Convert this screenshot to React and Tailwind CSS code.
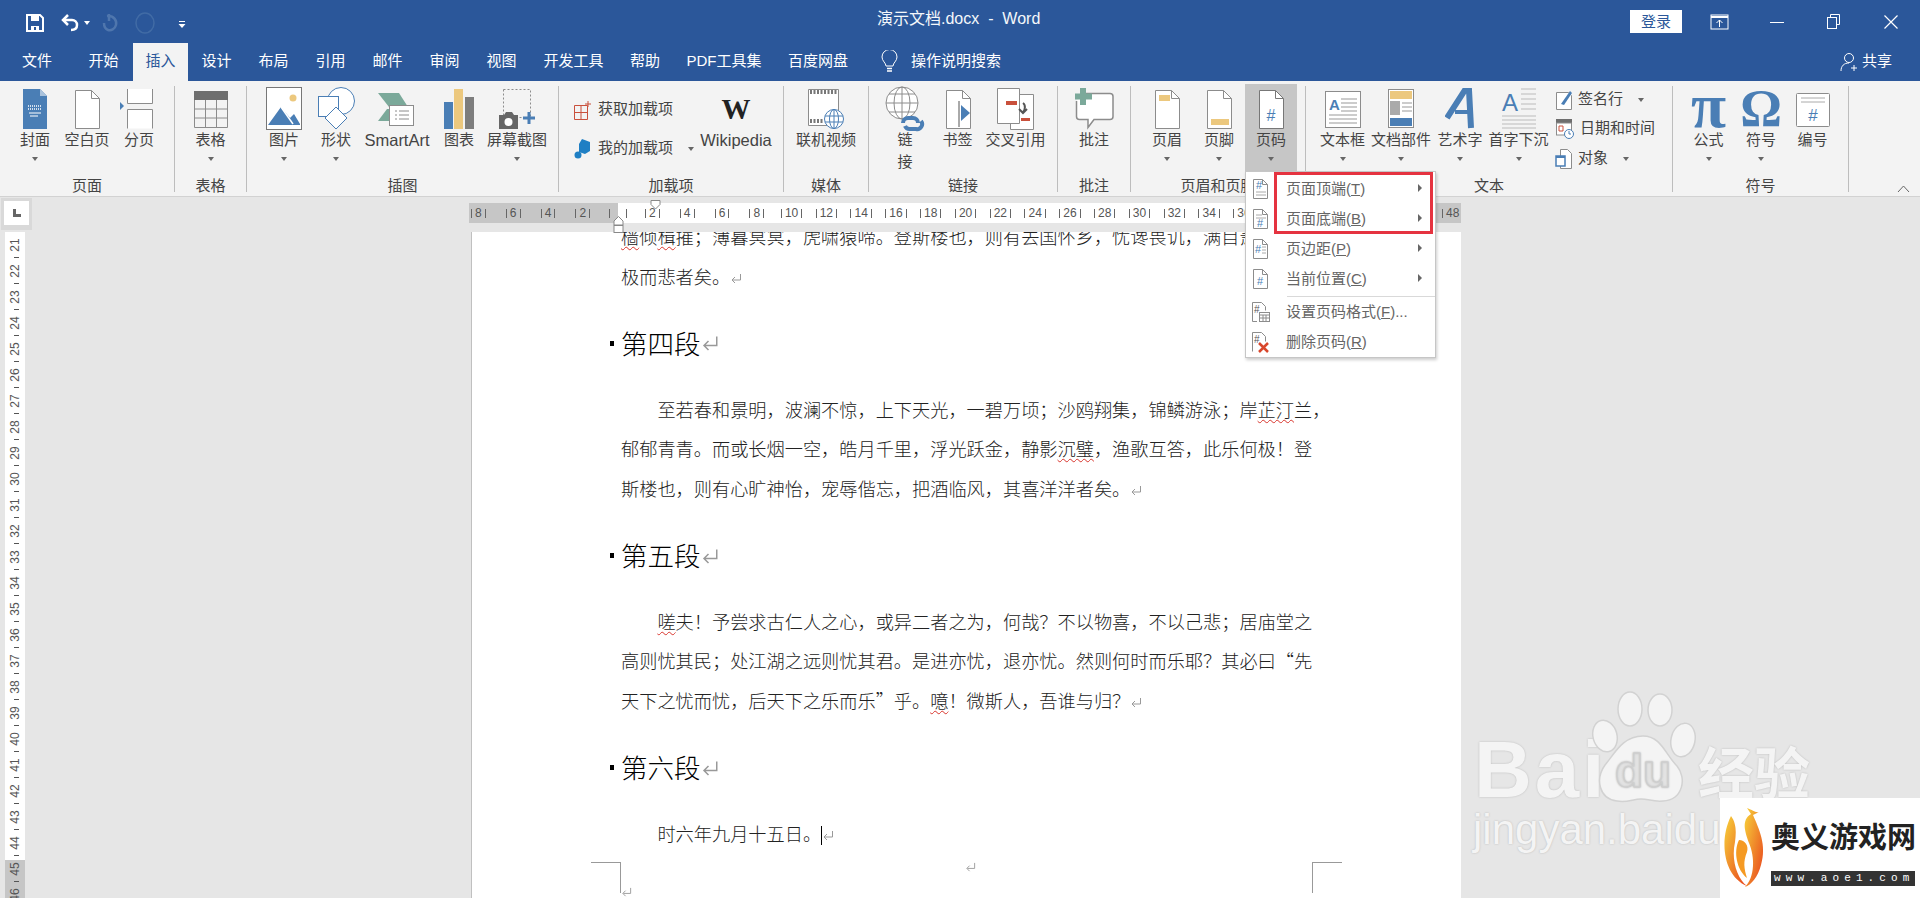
import React from "react";

// shared stroke colours for the office icons
const GR = "#8c8c8c";
const BL = "#4a7eb5";
const YE = "#ecc87e";
const RD = "#c9503c";
const GN = "#7ba99a";

const S = ({ w = 36, h = 40, children }) => (
  <svg width={w} height={h} viewBox={`0 0 ${w} ${h}`} fill="none">
    {children}
  </svg>
);

const Page = ({ x = 2, y = 1, w = 24, h = 38, f = 8, stroke = GR }) => (
  <>
    <path d={`M${x + 0.5} ${y + 0.5}h${w - f}l${f} ${f}v${h - f}h-${w}z`} fill="#fff" stroke={stroke} />
    <path d={`M${x + w - f + 0.5} ${y + 0.5}v${f}h${f}`} stroke={stroke} />
  </>
);

const Caret = ({ className = "" }) => (
  <span className={`inline-block w-0 h-0 border-x-[3.5px] border-x-transparent border-t-[4px] border-t-[#666] ${className}`} />
);

const IconCover = () => (
  <S w={28}>
    <path d="M2 0h17l7 7v33H2z" fill={BL} />
    <path d="M19 0l7 7h-7z" fill="#a9c2dc" />
    <path d="M7 17h14M7 20h14" stroke="#fff" strokeDasharray="1 1" strokeWidth="1.5" />
    <path d="M8 24h12M9 27h8" stroke="#fff" />
  </S>
);
const IconBlank = () => <S w={28}><Page /></S>;
const IconBreak = () => (
  <S w={38}>
    <path d="M7.5 0v14.5h25V0M7.5 39.5V20.5h25v19" stroke={GR} fill="#fff" />
    <path d="M0 13l4 4-4 4z" fill={BL} />
  </S>
);
const IconTable = () => (
  <S w={36}>
    <rect x="1" y="2" width="34" height="9" fill="#6e6e6e" />
    <path d="M1.5 11v27.5h33V11M1.5 20h33M1.5 29h33M12.5 11v27M23.5 11v27" stroke={GR} />
  </S>
);
const IconPicture = () => (
  <S w={36} h={44}>
    <rect x="0.5" y="0.5" width="35" height="42" fill="#fff" stroke="#777" />
    <circle cx="27" cy="11" r="3.5" fill={YE} />
    <path d="M2 38l13-18 9 11 4-4 6 10v1H2z" fill={BL} />
    <path d="M15 20l12 17" stroke="#fff" strokeWidth="1.5" />
  </S>
);
const IconShapes = () => (
  <S w={38} h={44}>
    <circle cx="24" cy="14" r="13.5" fill="#fff" stroke={BL} />
    <rect x="1.5" y="9.5" width="20" height="20" fill="#fff" stroke={BL} />
    <path d="M19 20l11 11-11 11-11-11z" fill="#fff" stroke={BL} />
  </S>
);
const IconSmartArt = () => (
  <S w={40} h={40}>
    <path d="M1 4h21l9 14H12z" fill={GN} />
    <path d="M1 32l9-12h14l-8 12z" fill={GN} />
    <rect x="12.5" y="16.5" width="24" height="20" fill="#fff" stroke={GR} />
    <path d="M18 22h2M22 22h10M18 26h2M22 26h10M18 30h2M22 30h10" stroke={GR} />
  </S>
);
const IconChart = () => (
  <S w={32} h={42}>
    <rect x="1" y="14" width="9" height="27" fill={BL} />
    <rect x="11" y="1" width="9" height="40" fill={YE} />
    <rect x="22" y="9" width="9" height="32" fill="#7d7d7d" />
  </S>
);
const IconShot = () => (
  <S w={38} h={42}>
    <rect x="5.5" y="1.5" width="27" height="28" stroke={GR} strokeDasharray="2 2" />
    <path d="M1 27h5l2-3h6l2 3h4v14H1z" fill="#666" />
    <circle cx="10.5" cy="34" r="4" fill="#fff" />
    <path d="M31 24v12M25 30h12" stroke={BL} strokeWidth="3" />
  </S>
);
const IconGetAddin = () => (
  <S w={20} h={20}>
    <path d="M1.5 5.5h13v14h-13zM1.5 12.5h13M8 5.5v14" stroke={RD} />
    <path d="M15 1v6M12 4h6" stroke={RD} />
  </S>
);
const IconMyAddin = () => (
  <S w={20} h={22}>
    <path d="M9 1l8 3v9l-5 3-6-2V6z" fill="#1f7fc4" />
    <circle cx="5" cy="17" r="3.5" fill="#1f7fc4" />
  </S>
);
const IconVideo = () => (
  <S w={38} h={44}>
    <path d="M1.5 2.5h30v36h-30z" fill="#fff" stroke={GR} />
    <path d="M3 5h27M3 34h14" stroke="#777" strokeWidth="4" strokeDasharray="2 1.5" />
    <circle cx="27" cy="32" r="9.5" fill="#fff" stroke={BL} />
    <ellipse cx="27" cy="32" rx="4.5" ry="9.5" stroke={BL} />
    <path d="M18 29h18M18 35h18M27 22v20" stroke={BL} />
  </S>
);
const IconLink = () => (
  <S w={40} h={46}>
    <circle cx="17" cy="17" r="16" fill="#fff" stroke={GR} />
    <ellipse cx="17" cy="17" rx="8" ry="16" stroke={GR} />
    <path d="M1 17h32M4 8h26M4 26h26M17 1v32" stroke={GR} />
    <path d="M18 37a5 5 0 0 1 5-5h5a5 5 0 0 1 5 5M20 40a5 5 0 0 0 5 3h6a5 5 0 0 0 5-8" stroke={BL} strokeWidth="4" />
  </S>
);
const IconBookmark = () => (
  <S w={28}>
    <Page />
    <path d="M15 12v26" stroke="#555" />
    <path d="M17 16l9 8-9 8z" fill={BL} />
  </S>
);
const IconCross = () => (
  <S w={40} h={44}>
    <path d="M14.5 7.5h23v35h-23z" fill="#fff" stroke={GR} />
    <path d="M1.5 1.5h22v35h-22z" fill="#fff" stroke={GR} />
    <rect x="10" y="14" width="11" height="4" fill={RD} />
    <rect x="25" y="31" width="9" height="3" fill={RD} />
    <path d="M27 16c3 2 2 7 0 9M23 22l4 4 4-4" stroke="#555" strokeWidth="2" />
  </S>
);
const IconComment = () => (
  <S w={40} h={44}>
    <path d="M8 6.5h28a3 3 0 0 1 3 3v20a3 3 0 0 1-3 3H20l-6 8v-8H5.5a3 3 0 0 1-3-3V14" fill="#fff" stroke={GR} strokeWidth="1.5" />
    <path d="M9 1v17M1 9.500h17" stroke={GN} strokeWidth="6" />
  </S>
);
const IconHeader = () => (
  <S w={28}>
    <Page />
    <rect x="6" y="6" width="11" height="6" fill={YE} />
  </S>
);
const IconFooter = () => (
  <S w={28}>
    <Page />
    <rect x="6" y="30" width="18" height="6" fill={YE} />
  </S>
);
const IconPageNum = () => (
  <S w={28}>
    <Page stroke="#777" />
    <text x="14" y="32" textAnchor="middle" fontSize="16" fill={BL} fontFamily="Liberation Sans">#</text>
  </S>
);
const IconTextbox = () => (
  <S w={38}>
    <rect x="1.5" y="2.500" width="35" height="36" fill="#fff" stroke={GR} />
    <text x="5" y="21" fontSize="15" fontWeight="700" fill={BL} fontFamily="Liberation Sans">A</text>
    <path d="M17 10h16M17 14h16M17 18h16M17 22h16M5 26h28M5 30h28M5 34h28" stroke="#999" />
  </S>
);
const IconParts = () => (
  <S w={28} h={42}>
    <rect x="1.5" y="1.500" width="25" height="38" fill="#fff" stroke={GR} />
    <rect x="3" y="3" width="22" height="8" fill={YE} />
    <rect x="3" y="13" width="10" height="14" fill="#aaa" />
    <path d="M15 15h10M15 19h10M15 23h10" stroke="#999" />
    <rect x="3" y="30" width="22" height="8" fill={BL} />
  </S>
);
const IconWordArt = () => (
  <S w={30} h={42}>
    <path d="M2 30l18-28h4l2 38" stroke={BL} strokeWidth="6" />
    <path d="M10 24h16" stroke={BL} strokeWidth="4" />
  </S>
);
const IconDropCap = () => (
  <S w={36} h={44}>
    <text x="1" y="24" fontSize="24" fill={BL} fontFamily="Liberation Sans">A</text>
    <path d="M20 2h15M20 7h15M20 12h15M20 17h15M20 22h15M1 29h34M1 33h34M1 37h34M1 41h34" stroke="#bbb" />
  </S>
);
const IconSign = () => (
  <S w={18} h={22}>
    <path d="M1.500 3.500h12l3 3v14h-15z" fill="#fff" stroke={GR} />
    <path d="M6 15l9-13 2 2-8 12z" fill={BL} />
  </S>
);
const IconDate = () => (
  <S w={20} h={22}>
    <rect x="1" y="1" width="16" height="4" fill="#6e6e6e" />
    <rect x="1.500" y="5" width="15" height="12" fill="#fff" stroke={GR} />
    <path d="M4 8h4v5H4z" stroke={RD} />
    <circle cx="14" cy="16" r="4.500" fill="#fff" stroke={BL} />
    <path d="M14 13v3h2" stroke={BL} />
  </S>
);
const IconObject = () => (
  <S w={18} h={22}>
    <path d="M5.500 1.500h7l4 4v15h-11z" fill="#fff" stroke={GR} />
    <rect x="1" y="8" width="9" height="10" fill="#fff" stroke={BL} strokeWidth="1.500" />
    <path d="M1 9h9" stroke={BL} strokeWidth="2" />
  </S>
);
const IconNumber = () => (
  <S w={36}>
    <rect x="1.500" y="4.500" width="33" height="33" rx="1" fill="#fff" stroke={GR} />
    <path d="M6 9h24M6 13h24" stroke="#aaa" />
    <text x="18" y="32" textAnchor="middle" fontSize="17" fill={BL} fontFamily="Liberation Sans">#</text>
  </S>
);

// ribbon button with icon, label and optional caret
const Btn = ({ w, icon, label, caret, active }) => (
  <div
    className={`flex flex-col items-center shrink-0 ${active ? "bg-[#c6c6c6] -mt-[2px] pt-[5px] h-[87px]" : "pt-[3px]"}`}
    style={{ width: w }}
  >
    <div className="h-[40px] flex items-center justify-center">{icon}</div>
    <div className="h-[22px] leading-[22px] whitespace-nowrap text-center">{label}</div>
    {caret && <div className="h-[16px] flex items-center"><Caret /></div>}
  </div>
);

const Group = ({ w, pl = 0, label, center, children, last }) => (
  <div className={`flex flex-col h-[106px] shrink-0 ${last ? "" : "border-r border-[#bdbdbd]"}`} style={{ width: w }}>
    <div className={`flex-1 flex ${center ? "justify-center" : ""}`} style={{ paddingLeft: pl }}>
      {children}
    </div>
    <div className="h-[18px] leading-[24px] text-center">{label}</div>
  </div>
);

const Row = ({ icon, label, caret, className = "" }) => (
  <div className={`flex items-center gap-[5px] h-[29px] ${className}`}>
    {icon}
    <span className="whitespace-nowrap">{label}</span>
    {caret && <Caret className="ml-[10px]" />}
  </div>
);

const tabs = [
  ["文件", 74], ["开始", 59], ["插入", 55], ["设计", 57], ["布局", 57], ["引用", 57], ["邮件", 57],
  ["审阅", 57], ["视图", 57], ["开发工具", 87], ["帮助", 56], ["PDF工具集", 102], ["百度网盘", 86],
];

const Ret = ({ size = 12, className = "" }) => (
  <svg width={size} height={size} viewBox="0 0 12 12" fill="none" className={`inline-block ${className}`}>
    <path d="M10.500 1v6h-8M5 4L2 7l3 3" stroke="#999" />
  </svg>
);

const W = ({ children }) => (
  <span className="underline decoration-wavy decoration-[#d8342c] decoration-1 underline-offset-2">{children}</span>
);

const Line = ({ indent, children }) => (
  <div className={`h-[39.6px] leading-[39.6px] whitespace-nowrap ${indent ? "pl-[36.4px]" : ""}`}>{children}</div>
);

const Heading = ({ children }) => (
  <div className="h-[93.400px] flex items-center text-[26.500px] text-black -ml-[11px]">
    <span className="w-[4px] h-[5px] bg-black mr-[7px] mt-[1px]" />
    {children}
    <Ret size={18} className="mt-[3px]" />
  </div>
);

const rulerNums = [];
for (let n = -8; n <= 48; n += 2) rulerNums.push(n);
const sideNums = [];
for (let n = 21; n <= 46; n++) sideNums.push(n);

const MIconPage = ({ children }) => (
  <svg width="20" height="22" viewBox="0 0 20 22" fill="none">
    <path d="M2.500 1.500h9l5 5v14h-14z" fill="#fff" stroke="#8c8c8c" />
    <path d="M11.500 1.500v5h5" stroke="#8c8c8c" />
    {children}
  </svg>
);
const hash = (x, y) => <text x={x} y={y} fontSize="11" fill="#4a7eb5" fontFamily="Liberation Sans">#</text>;

const menu = [
  { t: "页面顶端", k: "T", arrow: true, icon: <MIconPage>{hash(5, 11)}<path d="M5 14h10M5 17h10" stroke="#aaa" /></MIconPage> },
  { t: "页面底端", k: "B", arrow: true, icon: <MIconPage><path d="M5 7h6M5 10h10" stroke="#aaa" />{hash(6, 19)}</MIconPage> },
  { t: "页边距", k: "P", arrow: true, icon: <MIconPage>{hash(4, 15)}<path d="M11 9h4M11 12h4M11 15h4" stroke="#aaa" /></MIconPage> },
  { t: "当前位置", k: "C", arrow: true, icon: <MIconPage>{hash(6, 17)}</MIconPage> },
  null,
  {
    t: "设置页码格式", k: "F", tail: "...",
    icon: (
      <svg width="20" height="22" viewBox="0 0 20 22" fill="none">
        <path d="M1.500 1.500h9l4 4v4M6 20.500H1.500v-19" stroke="#8c8c8c" />
        <text x="3" y="12" fontSize="10" fill="#555" fontFamily="Liberation Sans">#</text>
        <rect x="8.500" y="11.500" width="10" height="9" fill="#fff" stroke="#8c8c8c" />
        <path d="M8.500 14h10M12 14v6M15 14v6M8.500 17h10" stroke="#8c8c8c" />
      </svg>
    ),
  },
  {
    t: "删除页码", k: "R",
    icon: (
      <svg width="20" height="22" viewBox="0 0 20 22" fill="none">
        <path d="M1.500 20.500v-19h9l4 4v5" stroke="#8c8c8c" />
        <text x="3" y="12" fontSize="10" fill="#555" fontFamily="Liberation Sans">#</text>
        <path d="M8 12l9 9M17 12l-9 9" stroke="#d8472c" strokeWidth="2.500" />
      </svg>
    ),
  },
];

const Watermark = () => (
  <div className="absolute left-[1470px] top-[690px] w-[340px] h-[170px] text-[#f4f4f4] font-bold [text-shadow:0_0_2px_#b5b5b5]">
    <div className="absolute left-[4px] top-[35px] text-[80px] leading-[90px] tracking-[3px] font-['Liberation_Sans',sans-serif]">Bai</div>
    <svg className="absolute left-[118px] top-0" width="110" height="116" viewBox="0 0 110 116">
      <g fill="#f4f4f4" stroke="#d2d2d2" strokeWidth="1.500">
        <ellipse cx="42" cy="19" rx="12" ry="17" />
        <ellipse cx="72" cy="20" rx="12" ry="16" />
        <ellipse cx="17" cy="46" rx="12" ry="16" transform="rotate(-15 17 46)" />
        <ellipse cx="95" cy="50" rx="12" ry="17" transform="rotate(12 95 50)" />
        <path d="M55 46c18 0 22 18 34 30 10 12 6 34-14 35-10 1-14-2-22-2s-14 4-24 2c-18-2-22-22-12-36 10-12 18-29 38-29z" />
      </g>
      <text x="55" y="97" textAnchor="middle" fontSize="46" fill="#e3e3e3" stroke="#cfcfcf" fontFamily="Liberation Sans">du</text>
    </svg>
    <div className="absolute left-[228px] top-[45px] text-[56px] leading-[70px] font-['Noto_Sans_CJK_SC',sans-serif] whitespace-nowrap">经验</div>
    <div className="absolute left-[3px] top-[110px] text-[42px] leading-[60px] font-normal font-['Liberation_Sans',sans-serif] whitespace-nowrap">jingyan.baidu</div>
  </div>
);

const Logo = () => (
  <div className="absolute right-0 bottom-0 w-[200px] h-[100px] bg-white flex items-center pl-[3px]">
    <svg width="44" height="84" viewBox="0 0 44 84" className="shrink-0">
      <defs>
        <linearGradient id="fl" x1="0" y1="0" x2="1" y2="1">
          <stop offset="0" stopColor="#f7d33a" />
          <stop offset="1" stopColor="#e8401c" />
        </linearGradient>
      </defs>
      <path d="M8 10C-4 34 0 70 24 80c-10-8-16-26-12-44 1-8 2-18-4-26z" fill="url(#fl)" />
      <path d="M16 34c-6 12-2 30 8 38-3-10-4-16 0-26 2-6-2-12-8-12z" fill="#f59a23" />
      <path d="M24 2c6 2 8 5 12 4l-6 3c6 14 14 30 8 50-3 12-10 20-16 22 10-10 10-30 4-44C22 26 18 14 28 8z" fill="url(#fl)" />
    </svg>
    <div className="ml-[4px] w-[144px]">
      <div className="text-[29px] leading-[50px] font-bold text-[#222] whitespace-nowrap font-['Noto_Sans_CJK_SC',sans-serif]">奥义游戏网</div>
      <div className="mt-[11px] h-[15px] leading-[15px] bg-[#333] text-white text-[11px] tracking-[5.100px] pl-[3px] whitespace-nowrap overflow-hidden font-['Liberation_Mono',monospace]">www.aoe1.com</div>
    </div>
  </div>
);

export default function App() {
  return (
    <div className="relative w-[1920px] h-[898px] overflow-hidden flex flex-col text-[15px] text-[#444] font-['Liberation_Sans','Noto_Sans_CJK_SC',sans-serif]">
      {/* title bar */}
      <div className="relative h-[43px] bg-[#2b579a] flex items-center text-white shrink-0">
        <div className="flex items-center pl-[26px] pt-[2px]">
          <svg width="18" height="18" viewBox="0 0 18 18" fill="none">
            <path d="M1 1h13l3 3v13H1z" stroke="#fff" strokeWidth="2" />
            <path d="M5 1h8v6H5z" fill="#fff" />
            <path d="M5 12h8v5H5z" fill="#fff" />
            <path d="M9 13v3" stroke="#2b579a" strokeWidth="2" />
          </svg>
          <svg className="ml-[17px]" width="20" height="18" viewBox="0 0 20 18" fill="none">
            <path d="M7 1L2 6l5 5" stroke="#fff" strokeWidth="2.500" />
            <path d="M3 6h8a5 5 0 0 1 5 5c0 3-2 5-6 5" stroke="#fff" strokeWidth="2.500" />
          </svg>
          <span className="ml-[3px] w-0 h-0 border-x-[3px] border-x-transparent border-t-[4px] border-t-white" />
          <svg className="ml-[11px]" width="18" height="20" viewBox="0 0 18 20" fill="none">
            <path d="M6 3c7-1 10 5 9 9-1 4-5 6-8 5-3-1-4-4-4-7" stroke="#4f76ad" strokeWidth="2.500" />
            <path d="M8 1v7" stroke="#4f76ad" strokeWidth="2.500" />
          </svg>
          <svg className="ml-[16px]" width="20" height="22" viewBox="0 0 20 22" fill="none">
            <ellipse cx="10" cy="11" rx="9" ry="10" stroke="#416ba5" strokeWidth="1.500" />
          </svg>
          <svg className="ml-[23px] mt-[3px]" width="8" height="9" viewBox="0 0 8 9" fill="none">
            <path d="M1 1.500h6" stroke="#fff" />
            <path d="M0.500 4h7L4 8z" fill="#fff" />
          </svg>
        </div>
        <div className="absolute left-[877px] top-[8px] text-[16px] leading-[22px] whitespace-nowrap text-[#f4f7fb]">演示文档.docx&nbsp;&nbsp;-&nbsp;&nbsp;Word</div>
        <div className="ml-auto flex items-center pr-[22px]">
          <div className="w-[52px] h-[23px] mr-[28px] bg-white text-[#2b579a] text-center leading-[23px]">登录</div>
          <svg width="20" height="16" viewBox="0 0 20 16" fill="none" className="mr-[40px]">
            <rect x="1" y="1" width="17" height="14" stroke="#fff" />
            <path d="M1 3h17" stroke="#fff" strokeWidth="2" />
            <path d="M9.500 13V6M6.500 9l3-3 3 3" stroke="#fff" />
          </svg>
          <svg width="14" height="14" viewBox="0 0 14 14" fill="none" className="mr-[43px]">
            <path d="M0 7.500h14" stroke="#fff" />
          </svg>
          <svg width="13" height="15" viewBox="0 0 13 15" fill="none" className="mr-[44px]">
            <path d="M3.500 3.500v-3h9v10h-3" stroke="#fff" />
            <rect x="0.500" y="3.500" width="9" height="11" stroke="#fff" />
          </svg>
          <svg width="14" height="14" viewBox="0 0 14 14" fill="none">
            <path d="M0.500 0.500l13 13M13.500 0.500l-13 13" stroke="#fff" strokeWidth="1.200" />
          </svg>
        </div>
      </div>

      {/* tab row */}
      <div className="h-[38px] bg-[#2b579a] flex text-white shrink-0">
        {tabs.map(([name, w]) => (
          <div
            key={name}
            style={{ width: w }}
            className={`h-full text-center pt-[7px] leading-[22px] ${name === "插入" ? "bg-[#f3f3f3] text-[#2b579a]" : ""}`}
          >
            {name}
          </div>
        ))}
        <svg className="ml-[20px] mt-[7px]" width="17" height="24" viewBox="0 0 17 24" fill="none">
          <path d="M5 16c0-3-4-5-4-9a7.500 7.500 0 0 1 15 0c0 4-4 6-4 9z" stroke="#fff" />
          <path d="M6 18.500h5M6 21h5" stroke="#fff" strokeWidth="1.500" />
        </svg>
        <div className="ml-[13px] pt-[7px] leading-[22px] whitespace-nowrap">操作说明搜索</div>
        <div className="ml-auto flex items-center gap-[3px] pr-[28px] pb-[1px]">
          <svg width="19" height="20" viewBox="0 0 19 20" fill="none">
            <circle cx="9" cy="6" r="4.500" stroke="#fff" />
            <path d="M1 19c0-5 3-8 8-8M14 13v6M11 16h6" stroke="#fff" />
          </svg>
          <span>共享</span>
        </div>
      </div>

      {/* ribbon */}
      <div className="relative h-[116px] bg-[#f3f3f3] border-b border-[#d2d2d2] flex pt-[5px] shrink-0">
        <Group w={175} pl={9} label="页面">
          <Btn w={52} icon={<IconCover />} label="封面" caret />
          <Btn w={52} icon={<IconBlank />} label="空白页" />
          <Btn w={52} icon={<IconBreak />} label="分页" />
        </Group>
        <Group w={72} center label="表格">
          <Btn w={52} icon={<IconTable />} label="表格" caret />
        </Group>
        <Group w={312} pl={11} label="插图">
          <Btn w={52} icon={<IconPicture />} label="图片" caret />
          <Btn w={52} icon={<IconShapes />} label="形状" caret />
          <Btn w={70} icon={<IconSmartArt />} label={<span className="text-[16.500px]">SmartArt</span>} />
          <Btn w={54} icon={<IconChart />} label="图表" />
          <Btn w={62} icon={<IconShot />} label="屏幕截图" caret />
        </Group>
        <Group w={225} pl={14} label="加载项">
          <div className="flex flex-col pt-[9px] w-[124px] shrink-0">
            <Row icon={<IconGetAddin />} label="获取加载项" className="h-[28px]" />
            <Row icon={<IconMyAddin />} label="我的加载项" caret className="mt-[10px] h-[28px]" />
          </div>
          <Btn
            w={78}
            icon={<span className="font-['Liberation_Serif',serif] font-bold text-[29px] text-[#222] leading-[40px]">W</span>}
            label={<span className="text-[16.500px]">Wikipedia</span>}
          />
        </Group>
        <Group w={85} center label="媒体">
          <Btn w={70} icon={<IconVideo />} label="联机视频" />
        </Group>
        <Group w={189} pl={10} label="链接">
          <Btn w={52} icon={<IconLink />} label={<>链<br />接</>} />
          <Btn w={53} icon={<IconBookmark />} label="书签" />
          <Btn w={63} icon={<IconCross />} label="交叉引用" />
        </Group>
        <Group w={73} center label="批注">
          <Btn w={52} icon={<IconComment />} label="批注" />
        </Group>
        <Group w={175} pl={10} label="页眉和页脚">
          <Btn w={52} icon={<IconHeader />} label="页眉" caret />
          <Btn w={52} icon={<IconFooter />} label="页脚" caret />
          <Btn w={52} icon={<IconPageNum />} label="页码" caret active />
        </Group>
        <Group w={367} pl={7} label="文本">
          <Btn w={59} icon={<IconTextbox />} label="文本框" caret />
          <Btn w={58} icon={<IconParts />} label="文档部件" caret />
          <Btn w={60} icon={<IconWordArt />} label="艺术字" caret />
          <Btn w={57} icon={<IconDropCap />} label="首字下沉" caret />
          <div className="flex flex-col ml-[8px]">
            <Row icon={<IconSign />} label="签名行" caret className="-mt-[1px]" />
            <Row icon={<IconDate />} label="日期和时间" />
            <Row icon={<IconObject />} label="对象" caret className="mt-[1px]" />
          </div>
        </Group>
        <Group w={176} pl={9} label="符号">
          <Btn
            w={53}
            icon={<span className="font-['Liberation_Serif',serif] font-bold text-[64px] leading-[40px] text-[#4a7eb5] -mt-[6px]">π</span>}
            label="公式"
            caret
          />
          <Btn
            w={52}
            icon={<span className="font-['Liberation_Serif',serif] font-bold text-[52px] leading-[40px] text-[#4a7eb5]">Ω</span>}
            label="符号"
            caret
          />
          <Btn w={51} icon={<IconNumber />} label="编号" />
        </Group>
        <svg className="absolute left-[1897px] top-[104px]" width="13" height="8" viewBox="0 0 13 8" fill="none">
          <path d="M1 7l5.500-6L12 7" stroke="#666" />
        </svg>
      </div>

      {/* document area */}
      <div className="flex-1 bg-[#e6e6e6] flex overflow-hidden">
        <div className="w-[469px] shrink-0 flex flex-col">
          <div className="ml-[1px] w-[31px] h-[32px] mt-[1px] bg-[#d9d9d9] p-[3px] shrink-0">
            <div className="w-full h-[24px] bg-white flex items-center justify-center">
              <span className="w-[8px] h-[8px] border-l-[3px] border-b-[3px] border-[#666]" />
            </div>
          </div>
          <div className="ml-[5px] mt-[2px] w-[20px] flex-1 overflow-hidden bg-[linear-gradient(#fff_628px,#c6c6c6_628px)]">
            {sideNums.map((n) => (
              <div key={n} className="relative h-[26px] flex items-center justify-center">
                <span className="-rotate-90 text-[12px] leading-none text-[#555]">{n}</span>
                <span className="absolute bottom-0 left-[9px] w-[5px] h-px bg-[#555]" />
              </div>
            ))}
          </div>
        </div>

        <div className="w-[992px] shrink-0 flex flex-col">
          <div className="relative mt-[6px] h-[20px] overflow-hidden flex bg-[linear-gradient(90deg,#c6c6c6_149px,#fff_149px,#fff_843px,#c6c6c6_843px)] shrink-0">
            <div className="flex -ml-[8px] shrink-0">
              {rulerNums.map((n) => (
                <div key={n} className="w-[34.800px] shrink-0 flex items-center justify-center gap-[3px] text-[12px] text-[#555]">
                  <span className="w-px h-[9px] bg-[#666]" />
                  <span className={n === 0 ? "w-[10px]" : ""}>{n === 0 ? "" : Math.abs(n)}</span>
                  <span className="w-px h-[9px] bg-[#666]" />
                </div>
              ))}
            </div>
          </div>
          <div className="relative ml-[2px] mt-[9px] flex-1 bg-white border-l border-[#c0c0c0] pl-[149px] text-[18.200px] font-light text-[#222] overflow-hidden font-['Noto_Sans_CJK_SC',sans-serif]">
            <div className="-mt-[15px]">
              <Line><W>樯</W>倾<W>楫</W>摧；薄暮冥冥，虎啸猿啼。登斯楼也，则有去国怀乡，忧谗畏讥，满目萧然，感</Line>
              <Line>极而悲者矣。<Ret /></Line>
              <Heading>第四段</Heading>
              <Line indent>至若春和景明，波澜不惊，上下天光，一碧万顷；沙鸥翔集，锦鳞游泳；岸<W>芷汀</W>兰，</Line>
              <Line>郁郁青青。而或长烟一空，皓月千里，浮光跃金，静影<W>沉璧</W>，渔歌互答，此乐何极！登</Line>
              <Line>斯楼也，则有心旷神怡，宠辱偕忘，把酒临风，其喜洋洋者矣。<Ret /></Line>
              <Heading>第五段</Heading>
              <Line indent><W>嗟</W>夫！予尝求古仁人之心，或异二者之为，何哉？不以物喜，不以己悲；居庙堂之</Line>
              <Line>高则忧其民；处江湖之远则忧其君。是进亦忧，退亦忧。然则何时而乐耶？其必曰“先</Line>
              <Line>天下之忧而忧，后天下之乐而乐”乎。<W>噫</W>！微斯人，吾谁与归？<Ret /></Line>
              <Heading>第六段</Heading>
              <Line indent>时六年九月十五日。<span className="inline-block w-px h-[19px] bg-black align-middle" /><Ret /></Line>
            </div>
            {/* margin crop marks */}
            <span className="absolute left-[119px] top-[630px] w-[30px] h-[31px] border-t border-r border-[#999]" />
            <span className="absolute left-[840px] top-[630px] w-[30px] h-[31px] border-t border-l border-[#999]" />
            <Ret size={11} className="absolute left-[149px] top-[655px]" />
            <Ret size={11} className="absolute left-[493px] top-[630px]" />
          </div>
        </div>
      </div>

      {/* indent markers on the ruler */}
      <svg className="absolute left-[650px] top-[200px]" width="12" height="10" viewBox="0 0 12 10" fill="none">
        <path d="M1 0.500h9v4L5.500 9 1 4.500z" fill="#fff" stroke="#888" />
      </svg>
      <svg className="absolute left-[613px] top-[216px]" width="12" height="17" viewBox="0 0 12 17" fill="none">
        <path d="M1 9V5l4.500-4.500L10 5v4z" fill="#fff" stroke="#888" />
        <rect x="1" y="9.500" width="9" height="7" fill="#fff" stroke="#888" />
      </svg>

      <Watermark />
      <Logo />

      {/* page number dropdown */}
      <div className="absolute left-[1245px] top-[171px] w-[191px] h-[187px] bg-white border border-[#c6c6c6] shadow-[1px_2px_3px_rgba(0,0,0,0.2)] pt-[2px] text-[15px] text-[#666]">
        {menu.map((m, i) =>
          m === null ? (
            <div key={i} className="ml-[41px] h-[3px] border-b border-[#d9d9d9]" />
          ) : (
            <div key={m.t} className="relative h-[30px] flex items-center pl-[5px]">
              <span className="w-[35px] shrink-0 flex">{m.icon}</span>
              <span className="whitespace-nowrap">
                {m.t}(<span className="underline">{m.k}</span>){m.tail}
              </span>
              {m.arrow && <span className="absolute right-[13px] top-[10px] w-0 h-0 border-y-[4px] border-y-transparent border-l-[4px] border-l-[#666]" />}
            </div>
          )
        )}
        <div className="absolute left-[28px] top-0 w-[159px] h-[62px] border-[3px] border-[#e53340]" />
      </div>
    </div>
  );
}
